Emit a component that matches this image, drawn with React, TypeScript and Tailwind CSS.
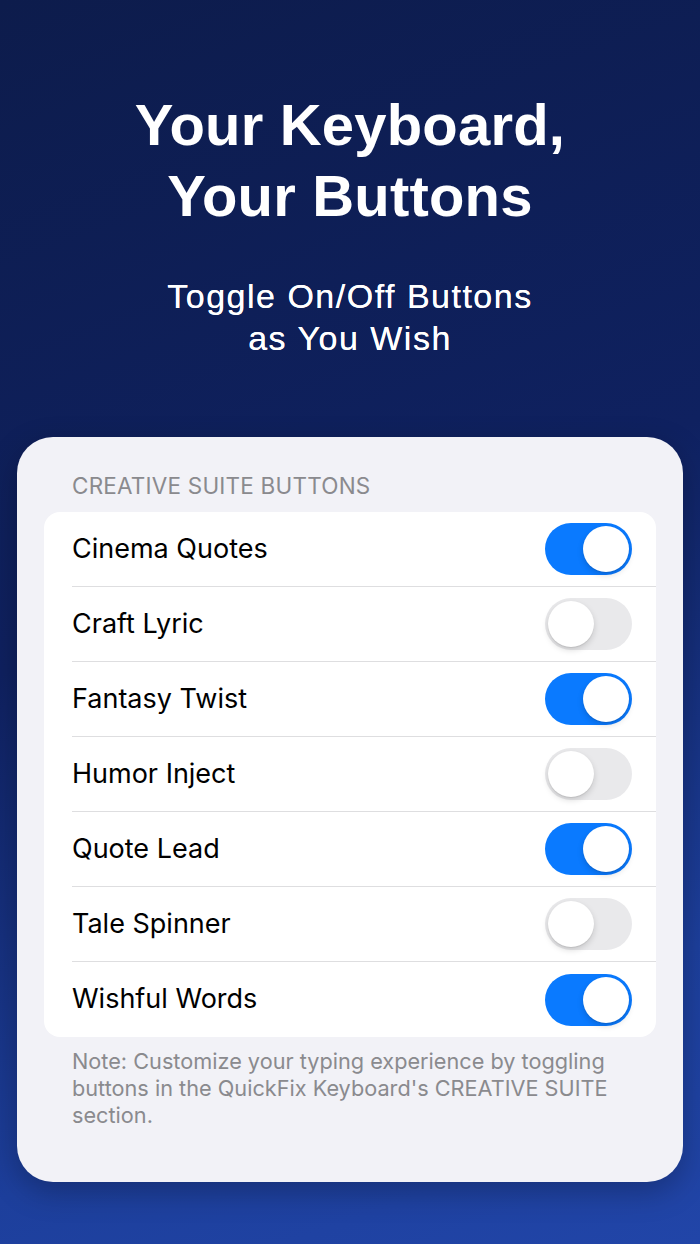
import { useState } from 'react';

const items = [
  { label: 'Cinema Quotes', on: true },
  { label: 'Craft Lyric', on: false },
  { label: 'Fantasy Twist', on: true },
  { label: 'Humor Inject', on: false },
  { label: 'Quote Lead', on: true },
  { label: 'Tale Spinner', on: false },
  { label: 'Wishful Words', on: true },
];

const Toggle = ({ on, onClick }: { on: boolean; onClick: () => void }) => {
  return (
    <button
      onClick={onClick}
      className={`relative w-[87px] h-[52px] rounded-full transition-colors ${
        on ? 'bg-[#0a7aff]' : 'bg-[#e9e9eb]'
      }`}
    >
      <span
        className={`absolute top-[3px] w-[46px] h-[46px] rounded-full bg-white shadow-[0_3px_6px_rgba(0,0,0,0.15),0_1px_1px_rgba(0,0,0,0.08)] transition-all ${
          on ? 'left-[38px]' : 'left-[3px]'
        }`}
      />
    </button>
  );
};

const App = () => {
  const [state, setState] = useState(items.map((i) => i.on));

  return (
    <div className="w-[700px] h-[1244px] overflow-hidden bg-[linear-gradient(160deg,#0d1c4c_0%,#0f2160_45%,#1d3f9c_80%,#2145a8_100%)] flex flex-col items-center">
      <h1 className="mt-[89px] text-white text-center font-bold text-[58px] leading-[71px] tracking-[0.2px] font-['Liberation_Sans',Arial,sans-serif]">
        Your Keyboard,
        <br />
        Your Buttons
      </h1>
      <p className="mt-[44px] text-white text-center text-[34px] leading-[42px] tracking-[1.5px] [text-shadow:0_0_0.6px_#fff] font-['Liberation_Sans',Arial,sans-serif]">
        Toggle On/Off Buttons
        <br />
        as You Wish
      </p>

      <div className="mt-[78px] w-[666px] h-[745px] rounded-[36px] bg-[#f2f2f7] shadow-[0_10px_30px_rgba(0,0,0,0.25)] px-[27px] pt-[34px] font-['Inter',sans-serif]">
        <div className="px-[28px] text-[22.5px] leading-[30px] text-[#8a8a8e] tracking-[0.2px]">
          CREATIVE SUITE BUTTONS
        </div>
        <div className="mt-[11px] bg-white rounded-[16px] overflow-hidden">
          {items.map((item, i) => (
            <div key={item.label} className="pl-[28px] flex">
              <div
                className={`flex-1 h-[75px] flex items-center justify-between pr-[24px] ${
                  i < items.length - 1 ? 'border-b border-[#dedee0]' : ''
                }`}
              >
                <span className="text-[27px] text-black">{item.label}</span>
                <Toggle
                  on={state[i]}
                  onClick={() =>
                    setState((s) => s.map((v, j) => (j === i ? !v : v)))
                  }
                />
              </div>
            </div>
          ))}
        </div>
        <p className="mt-[11px] px-[28px] text-[21.7px] leading-[27px] text-[#8a8a8e]">
          Note: Customize your typing experience by toggling buttons in the
          QuickFix Keyboard's CREATIVE SUITE section.
        </p>
      </div>
    </div>
  );
};

export default App;
